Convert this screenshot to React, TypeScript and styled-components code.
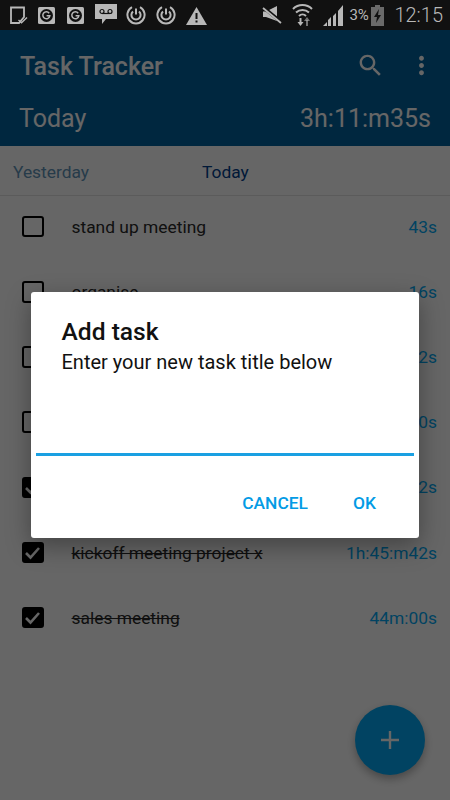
import React from 'react';
import styled, { createGlobalStyle } from 'styled-components';

const GlobalStyle = createGlobalStyle`
  html, body {
    margin: 0;
    padding: 0;
    background: #fff;
    font-family: Roboto, "Liberation Sans", sans-serif;
  }
`;

const Screen = styled.div`
  position: relative;
  width: 450px;
  height: 800px;
  overflow: hidden;
  display: flex;
  flex-direction: column;
  background: #fff;
`;

const StatusBar = styled.div`
  height: 30px;
  flex: none;
  display: flex;
  align-items: center;
  justify-content: space-between;
  padding: 0 7px 0 9px;
  background: #111;
  color: #b8b8b8;
`;

const StatusGroup = styled.div`
  display: flex;
  align-items: center;
  gap: 10px;
`;

const Percent = styled.span`
  font-size: 15px;
  margin: 0 -7px 0 -3px;
  letter-spacing: -0.3px;
`;

const Clock = styled.span`
  font-size: 20px;
  font-weight: 300;
`;

const Header = styled.header`
  flex: none;
  height: 116px;
  background: #02629f;
  color: #fff;
`;

const TopRow = styled.div`
  height: 72px;
  display: flex;
  align-items: center;
  padding: 0 14px 2px 20px;
  box-sizing: border-box;
`;

const Title = styled.h1`
  flex: 1;
  margin: 0;
  padding-top: 2px;
  font-size: 25px;
  font-weight: 500;
`;

const SearchIcon = styled.svg`
  display: block;
  fill: currentColor;
`;

const MoreIcon = styled.svg`
  display: block;
  fill: currentColor;
  margin-left: 22px;
`;

const SummaryRow = styled.div`
  display: flex;
  justify-content: space-between;
  padding: 0 19px;
  font-size: 25px;
  line-height: 34px;
`;

const Tabs = styled.nav`
  flex: none;
  height: 50px;
  display: flex;
  align-items: center;
  box-sizing: border-box;
  padding: 2px 0 0 13px;
  font-size: 17.4px;
  border-bottom: 1px solid #e4e4e4;
`;

const Tab = styled.span<{ $active?: boolean }>`
  color: ${(p) => (p.$active ? '#02408c' : '#5f93b8')};
  width: 189px;
`;

const TaskList = styled.ul`
  list-style: none;
  margin: -2px 0 0;
  padding: 0;
`;

const TaskRow = styled.li`
  height: 65.2px;
  display: flex;
  align-items: center;
  padding: 0 13px 0 22px;
  font-size: 17.4px;
`;

const CheckBox = styled.span<{ $checked?: boolean }>`
  width: 21.5px;
  height: 21.5px;
  flex: none;
  box-sizing: border-box;
  border: 2.5px solid #000;
  border-radius: 3px;
  background: ${(p) => (p.$checked ? '#000' : 'transparent')};
  color: #fff;
  display: flex;
  align-items: center;
  justify-content: center;
`;

const TaskName = styled.span<{ $done?: boolean }>`
  flex: 1;
  margin-left: 28px;
  color: #2a2a2a;
  text-decoration: ${(p) => (p.$done ? 'line-through' : 'none')};
`;

const TaskTime = styled.span`
  color: #03a9f4;
`;

const Fab = styled.button`
  position: absolute;
  right: 25px;
  bottom: 25px;
  width: 70px;
  height: 70px;
  padding: 0;
  border: 0;
  border-radius: 50%;
  background: #03a9f4;
  color: #fff;
  display: flex;
  align-items: center;
  justify-content: center;
  box-shadow: 0 4px 8px rgba(0, 0, 0, 0.3);
`;

const Scrim = styled.div`
  position: absolute;
  top: 30px;
  left: 0;
  right: 0;
  bottom: 0;
  background: rgba(0, 0, 0, 0.6);
  display: flex;
  align-items: center;
  justify-content: center;
`;

const Dialog = styled.div`
  width: 388px;
  height: 246px;
  box-sizing: border-box;
  padding-top: 26px;
  background: #fff;
  border-radius: 3px;
  box-shadow: 0 8px 24px rgba(0, 0, 0, 0.35);
  display: flex;
  flex-direction: column;
`;

const DialogTitle = styled.h2`
  margin: 0 0 0 30.5px;
  font-size: 24.6px;
  line-height: 28px;
  font-weight: 500;
  color: #111;
`;

const DialogText = styled.p`
  margin: 3px 0 0 30.5px;
  font-size: 20px;
  line-height: 26px;
  color: #111;
`;

const Field = styled.div`
  height: 2.5px;
  margin: 78px 5px 0;
  background: #1aa0e2;
`;

const DialogActions = styled.div`
  display: flex;
  justify-content: flex-end;
  gap: 45px;
  margin-top: 35px;
  padding-right: 43px;
`;

const DialogButton = styled.span`
  font-size: 17.4px;
  line-height: 24px;
  font-weight: 500;
  color: #039be5;
`;

const CheckMark = () => (
  <svg width="17" height="17" viewBox="0 0 17 17" fill="none" stroke="currentColor" strokeWidth="2.6">
    <path d="M2 9l4.5 4.5L15 4" />
  </svg>
);

const StatusIcons = () => (
  <StatusGroup>
    {/* sd card with tick */}
    <svg width="19" height="20" viewBox="0 0 19 20">
      <path d="M2 2.500h13v9.500l-5 6H2z" fill="none" stroke="currentColor" strokeWidth="1.8" />
      <path d="M9.500 15l3 2.800L18 12.500" fill="none" stroke="currentColor" strokeWidth="1.4" />
    </svg>
    {[0, 1].map((k) => (
      <svg key={k} width="19" height="19" viewBox="0 0 19 19" style={{ marginLeft: k ? 0 : -1 }}>
        <rect x="1" y="1" width="17" height="17" rx="1.5" fill="currentColor" />
        <circle cx="9.5" cy="9.5" r="6.5" fill="#111" />
        <path d="M12.200 7.200a3.500 3.500 0 1 0 .6 2.600H9.600" fill="none" stroke="currentColor" strokeWidth="1.5" />
      </svg>
    ))}
    {/* voicemail bubble */}
    <svg width="22" height="24" viewBox="0 0 22 24">
      <path d="M0 1h22v15H11l-4 5v-5H0z" fill="currentColor" />
      <circle cx="7" cy="8.5" r="2" fill="none" stroke="#111" strokeWidth="1.2" />
      <circle cx="15" cy="8.5" r="2" fill="none" stroke="#111" strokeWidth="1.2" />
      <path d="M7 10.500h8" stroke="#111" strokeWidth="1.2" />
    </svg>
    {[0, 1].map((k) => (
      <svg key={k} width="20" height="20" viewBox="0 0 20 20" style={{ marginLeft: k ? 0 : -1 }} fill="none" stroke="currentColor">
        <path d="M6 2.200a8.600 8.600 0 1 0 8 0" strokeWidth="2" />
        <path d="M7 6.500a4.600 4.600 0 1 0 6 0" strokeWidth="2" />
        <path d="M10 3.500v6" strokeWidth="2" />
      </svg>
    ))}
    <svg width="21" height="19" viewBox="0 0 21 19">
      <path d="M10.500 1L21 19H0z" fill="currentColor" />
      <path d="M9.500 7h2v6h-2zM9.500 14.500h2v2h-2z" fill="#111" />
    </svg>
  </StatusGroup>
);

const StatusTray = () => (
  <StatusGroup>
    {/* muted speaker */}
    <svg width="20" height="20" viewBox="0 0 20 20">
      <path d="M1 6.500h3L15 1v15L4 12H1z" fill="currentColor" />
      <path d="M1 2l18 15" stroke="#111" strokeWidth="3.5" />
      <path d="M1 3l18 15" stroke="currentColor" strokeWidth="1.8" />
    </svg>
    {/* wifi with up/down arrows */}
    <svg width="21" height="24" viewBox="0 0 21 24" fill="none" stroke="currentColor">
      <path d="M1 6a13.500 13.500 0 0 1 19 0" strokeWidth="2" />
      <path d="M4 9.500a9.500 9.500 0 0 1 13 0" strokeWidth="2" />
      <path d="M7 13a5 5 0 0 1 7 0" strokeWidth="2" />
      <path d="M8.500 15v5" strokeWidth="2" />
      <path d="M5.500 19l3 4 3-4z" fill="currentColor" stroke="none" />
      <path d="M15 17v6" strokeWidth="2" opacity="0.6" />
      <path d="M12 18l3-4 3 4z" fill="currentColor" stroke="none" opacity="0.6" />
    </svg>
    {/* signal bars */}
    <svg width="20" height="21" viewBox="0 0 20 21" fill="currentColor">
      <path d="M0 21l4-4v4zM5 21v-6l3-3v9zM10 21V11l3-3v13zM15 21V6l5-6v21z" />
    </svg>
    <Percent>3%</Percent>
    {/* low battery, charging */}
    <svg width="13" height="21" viewBox="0 0 13 21">
      <path d="M4 0h5v2h4v19H0V2h4z" fill="#6a6a6a" />
      <path d="M8 4L3 12h3l-1 6 5-8H7z" fill="#111" />
    </svg>
    <Clock>12:15</Clock>
  </StatusGroup>
);

// rows 3 to 5 sit behind the dialog, only the end of their times shows
const tasks = [
  { name: 'stand up meeting', time: '43s', done: false },
  { name: 'organise', time: '16s', done: false },
  { name: '', time: '12s', done: false },
  { name: '', time: '10s', done: false },
  { name: '', time: '12s', done: true },
  { name: 'kickoff meeting project x', time: '1h:45:m42s', done: true },
  { name: 'sales meeting', time: '44m:00s', done: true },
];

export default function App() {
  return (
    <Screen>
      <GlobalStyle />
      <StatusBar>
        <StatusIcons />
        <StatusTray />
      </StatusBar>
      <Header>
        <TopRow>
          <Title>Task Tracker</Title>
          <SearchIcon width="29" height="29" viewBox="0 0 24 24">
            <path d="M15.500 14h-.79l-.28-.27C15.410 12.590 16 11.110 16 9.500 16 5.910 13.090 3 9.500 3S3 5.910 3 9.500 5.910 16 9.500 16c1.610 0 3.090-.59 4.230-1.570l.27.28v.79l5 4.990L20.490 19l-4.990-5zm-6 0C7.010 14 5 11.990 5 9.500S7.010 5 9.500 5 14 7.010 14 9.500 11.990 14 9.500 14z" />
          </SearchIcon>
          <MoreIcon width="29" height="29" viewBox="0 0 24 24">
            <path d="M12 8c1.100 0 2-.9 2-2s-.9-2-2-2-2 .9-2 2 .9 2 2 2zm0 2c-1.100 0-2 .9-2 2s.9 2 2 2 2-.9 2-2-.9-2-2-2zm0 6c-1.100 0-2 .9-2 2s.9 2 2 2 2-.9 2-2-.9-2-2-2z" />
          </MoreIcon>
        </TopRow>
        <SummaryRow>
          <span>Today</span>
          <span>3h:11:m35s</span>
        </SummaryRow>
      </Header>
      <Tabs>
        <Tab>Yesterday</Tab>
        <Tab $active>Today</Tab>
      </Tabs>
      <TaskList>
        {tasks.map((t, i) => (
          <TaskRow key={i}>
            <CheckBox $checked={t.done}>{t.done && <CheckMark />}</CheckBox>
            <TaskName $done={t.done}>{t.name}</TaskName>
            <TaskTime>{t.time}</TaskTime>
          </TaskRow>
        ))}
      </TaskList>
      <Fab aria-label="Add">
        <svg width="20" height="20" viewBox="0 0 20 20" fill="currentColor">
          <path d="M8.800 1h2.400v7.800H19v2.400h-7.800V19H8.800v-7.800H1V8.800h7.800z" />
        </svg>
      </Fab>
      <Scrim>
        <Dialog>
          <DialogTitle>Add task</DialogTitle>
          <DialogText>Enter your new task title below</DialogText>
          <Field />
          <DialogActions>
            <DialogButton>CANCEL</DialogButton>
            <DialogButton>OK</DialogButton>
          </DialogActions>
        </Dialog>
      </Scrim>
    </Screen>
  );
}
